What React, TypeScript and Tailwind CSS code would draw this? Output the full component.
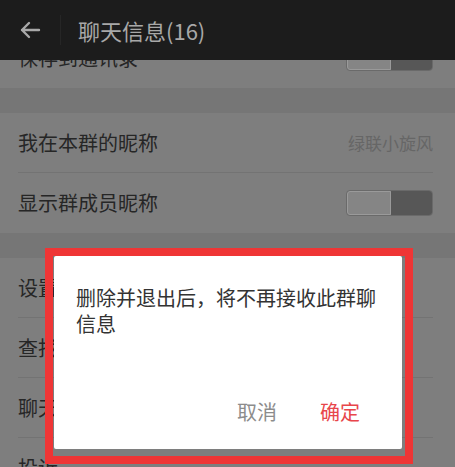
import React from "react";

const font = "font-['Noto_Sans_CJK_SC','Noto_Sans',sans-serif]";

function Toggle() {
  return (
    <div className="flex w-[87px] h-[26px] rounded-[4px] border border-[#6a6a6a] overflow-hidden">
      <div className="flex-1 bg-[#858585] border border-[#9a9a9a] rounded-l-[3px]" />
      <div className="flex-1 bg-[#575757]" />
    </div>
  );
}

function Row({ label, right, last }: { label: string; right?: React.ReactNode; last?: boolean }) {
  return (
    <div className="pl-[18px] pr-[22px]">
      <div className={`flex items-center justify-between h-[60px] ${last ? "" : "border-b border-[#737373]"}`}>
        <span className="text-[20px] text-[#262626]">{label}</span>
        {right}
      </div>
    </div>
  );
}

export default function App() {
  return (
    <div className={`relative w-[455px] h-[467px] overflow-hidden bg-[#7e7e7e] ${font}`}>
      {/* 顶部栏 */}
      <header className="flex items-center h-[60px] bg-[#1c1c1c]">
        <div className="flex items-center justify-center w-[60px] h-full">
          <svg width="22" height="18" viewBox="0 0 22 18" fill="none" stroke="#a9a9a9" strokeWidth="2.4" strokeLinecap="round" strokeLinejoin="round">
            <path d="M20 9H3M10 2L3 9l7 7" />
          </svg>
        </div>
        <div className="w-px h-[30px] bg-[#262626]" />
        <span className="ml-[17px] text-[22px] text-[#a8a8a8]">聊天信息(16)</span>
      </header>

      {/* 列表 */}
      <div className="overflow-hidden h-[407px]">
        <div className="-mt-[32px]">
          <Row label="保存到通讯录" right={<Toggle />} last />
        </div>
        <div className="h-[25px] bg-[#767676]" />
        <Row label="我在本群的昵称" right={<span className="text-[17px] text-[#666666]">绿联小旋风</span>} />
        <Row label="显示群成员昵称" right={<Toggle />} last />
        <div className="h-[25px] bg-[#767676]" />
        <Row label="设置当前聊天背景" />
        <Row label="查找聊天记录" />
        <Row label="聊天文件" />
        <Row label="投诉" last />
      </div>

      {/* 对话框 */}
      <div className="absolute left-[54px] top-[256px] w-[348px] h-[193px] bg-white rounded-[2px] flex flex-col">
        <p className="pt-[29px] px-[22px] text-[20px] leading-[26px] text-[#333333]">
          删除并退出后，将不再接收此群聊信息
        </p>
        <div className="mt-auto flex justify-end gap-[43px] pr-[42px] pb-[24px] text-[20px] leading-[26px]">
          <button className="text-[#8c8c8c]">取消</button>
          <button className="text-[#e8464b]">确定</button>
        </div>
      </div>

      {/* 红框标注 */}
      <div className="absolute left-[45px] top-[248px] w-[368px] h-[216px] border-[8px] border-[#ef3535] pointer-events-none" />
    </div>
  );
}
